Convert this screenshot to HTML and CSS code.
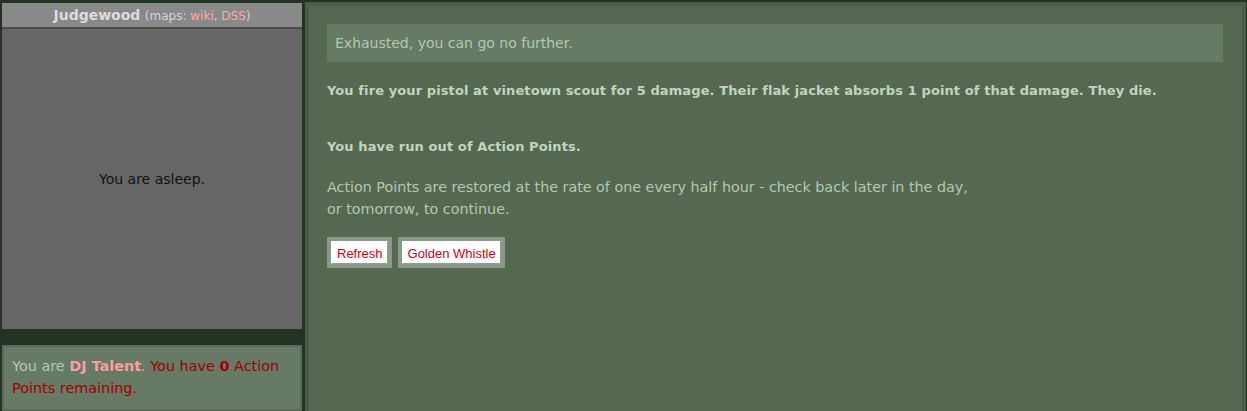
FILE: index.html
```html
<!DOCTYPE html>
<html lang="en">
<head>
    <meta charset="UTF-8">
    <title>Urban Dead - Judgewood</title>
    <link rel="stylesheet" href="styles.css">
</head>
<body>
    <div class="page">
        <div class="side">
            <div class="loc-title">
                <b>Judgewood</b> <span class="maps">(maps: <a href="#">wiki</a>, <a href="#">DSS</a>)</span>
            </div>
            <div class="map-area">You are asleep.</div>
            <div class="status">
                You are <a href="#" class="me">DJ Talent</a>. <span class="ap">You have <b>0</b> Action Points remaining.</span>
            </div>
        </div>

        <div class="main">
            <div class="notice">Exhausted, you can go no further.</div>
            <p class="strong">You fire your pistol at vinetown scout for 5 damage. Their flak jacket absorbs 1 point of that damage. They die.</p>
            <p class="strong gap">You have run out of Action Points.</p>
            <p class="info">Action Points are restored at the rate of one every half hour - check back later in the day,<br>or tomorrow, to continue.</p>
            <div class="buttons">
                <span class="btn-wrap"><button type="button">Refresh</button></span>
                <span class="btn-wrap"><button type="button">Golden Whistle</button></span>
            </div>
        </div>
    </div>
</body>
</html>
```

FILE: styles.css
```css
body {
    margin: 0;
    padding: 2px 1px 0 2px;
    background: #243323;
    font-family: 'DejaVu Sans', Verdana, sans-serif;
    font-size: 14px;
    line-height: 22px;
    color: #b4c8b0;
}
a {
    text-decoration: none;
}
.page {
    display: flex;
    gap: 3px;
    height: 409px;
}
.side {
    width: 300px;
    flex-shrink: 0;
    display: flex;
    flex-direction: column;
    padding-top: 1px;
}
.loc-title {
    background: #898989;
    color: #dcdcdc;
    text-align: center;
    height: 24px;
    line-height: 24px;
    border-bottom: 2px solid #4d4d4d;
}
.loc-title b {
    font-size: 14px;
}
.maps {
    font-size: 12px;
    color: #d4d4d4;
}
.maps a {
    color: #ffaaaa;
}
.map-area {
    background: #666666;
    color: #111;
    height: 300px;
    display: flex;
    align-items: center;
    justify-content: center;
}
.status {
    margin-top: 16px;
    background: #677a65;
    border: 2px solid #5a6b57;
    padding: 8px 8px 10px 8px;
    font-size: 14.4px;
}
.status .me {
    color: #ff9c9c;
    font-weight: bold;
}
.ap {
    color: #a00000;
}
.main {
    flex: 1;
    background: #566852;
    border: 4px solid #4b5c48;
    border-bottom: none;
    padding: 18px 19px 0 18px;
}
.notice {
    background: #677a65;
    padding: 8px 8px;
    color: #b4c8b0;
}
.main p {
    margin: 18px 0 17px;
}
.main p.info {
    font-size: 14.3px;
}
.strong {
    font-weight: bold;
    font-size: 13px;
    letter-spacing: 0.1px;
    color: #c2d4bd;
}
.main p.gap {
    margin-top: 34px;
}
.buttons {
    display: flex;
    gap: 6px;
}
.btn-wrap {
    background: #889987;
    padding: 4px;
    display: inline-block;
}
button {
    font-family: 'Liberation Sans', Arial, sans-serif;
    font-size: 13px;
    color: #cc0022;
    background: #fff;
    border: 1px solid;
    border-color: #fff #999 #999 #fff;
    padding: 5px 4px 2px 5px;
    line-height: 14px;
    display: block;
}
```
